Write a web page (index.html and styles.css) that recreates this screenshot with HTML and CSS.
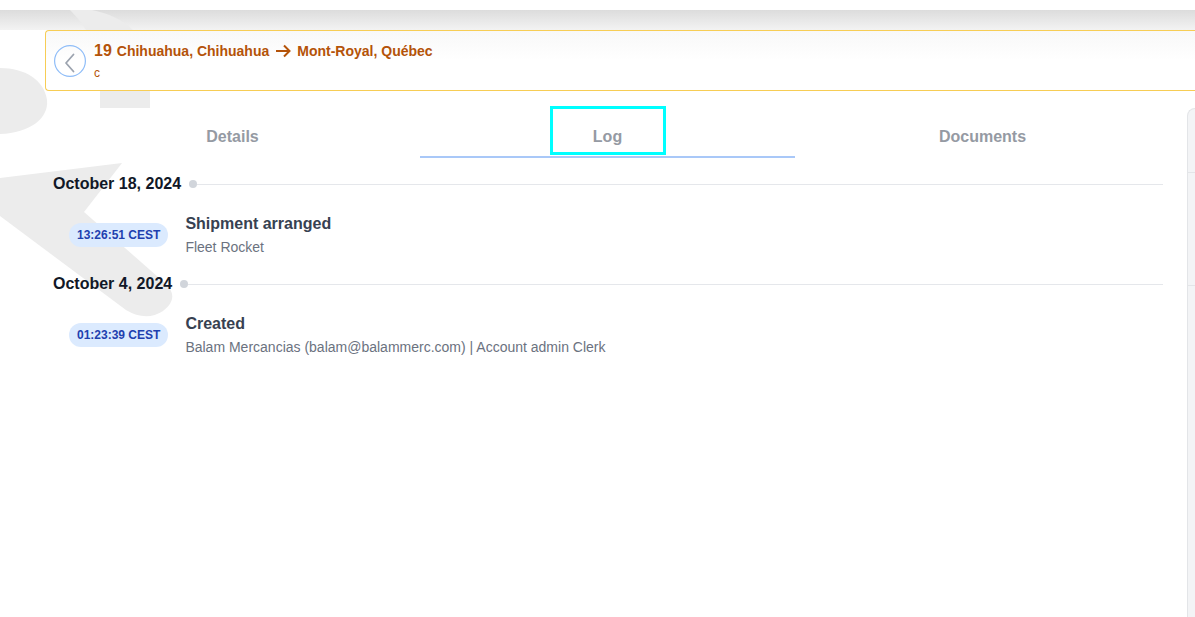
FILE: index.html
```
<!DOCTYPE html>
<html lang="en">
<head>
    <meta charset="UTF-8">
    <title>Shipment log</title>
    <link rel="stylesheet" href="styles.css">
</head>
<body>
    <div class="top-shade"></div>

    <!-- logo en filigrane derrière la page -->
    <svg class="watermark" width="200" height="340" viewBox="0 0 200 340">
        <path d="M92 10 Q150 22 150 78 L150 108 L100 108 L100 80 Q100 40 70 10 Z" />
        <path d="M0 68 C25 68 44 80 47 100 C49 118 30 133 0 134 Z" />
        <path d="M0 178 L122 163 L84 212 L166 284 Q180 298 163 311 Q146 322 126 310 L0 216 Z" />
    </svg>

    <div class="shipment-header">
        <button class="back-button" aria-label="Back">
            <svg width="32" height="32" viewBox="0 0 32 32">
                <circle cx="16" cy="16" r="15.4" fill="none" stroke="#8fbdf8" stroke-width="1.2" />
                <path d="M19.5 9.5 L12 18 L19.5 26.5" fill="none" stroke="#9ca3af" stroke-width="1.8" stroke-linecap="round" stroke-linejoin="round" />
            </svg>
        </button>
        <div class="shipment-info">
            <div class="shipment-title">
                <span class="shipment-id">19</span>
                <span>Chihuahua, Chihuahua</span>
                <svg class="route-arrow" width="16" height="14" viewBox="0 0 16 14">
                    <path d="M1 7 H14.5 M9 1.5 L14.5 7 L9 12.5" fill="none" stroke="#b45309" stroke-width="2" />
                </svg>
                <span>Mont-Royal, Québec</span>
            </div>
            <div class="shipment-sub">c</div>
        </div>
    </div>

    <div class="layout">
        <div class="main">
            <div class="tabs">
                <div class="tab"><button class="tab-button">Details</button></div>
                <div class="tab active"><button class="tab-button focused">Log</button></div>
                <div class="tab"><button class="tab-button">Documents</button></div>
            </div>

            <div class="timeline">
                <div class="log-day">
                    <div class="day-header">
                        <span class="day-label">October 18, 2024</span>
                        <span class="day-dot"></span>
                        <span class="day-line"></span>
                    </div>
                    <div class="log-entry">
                        <span class="log-time">13:26:51 CEST</span>
                        <div class="log-text">
                            <div class="log-title">Shipment arranged</div>
                            <div class="log-meta">Fleet Rocket</div>
                        </div>
                    </div>
                </div>

                <div class="log-day">
                    <div class="day-header">
                        <span class="day-label">October 4, 2024</span>
                        <span class="day-dot"></span>
                        <span class="day-line"></span>
                    </div>
                    <div class="log-entry">
                        <span class="log-time">01:23:39 CEST</span>
                        <div class="log-text">
                            <div class="log-title">Created</div>
                            <div class="log-meta">Balam Mercancias (balam@balammerc.com) | Account admin Clerk</div>
                        </div>
                    </div>
                </div>
            </div>
        </div>

        <aside class="side-panel">
            <div class="side-head"></div>
            <div class="side-block"></div>
        </aside>
    </div>
</body>
</html>
```

FILE: styles.css
```
body {
    margin: 0;
    padding: 0;
    font-family: "Liberation Sans", Arial, sans-serif;
    background-color: #ffffff;
    overflow: hidden;
}

.top-shade {
    height: 20px;
    margin-top: 10px;
    background: linear-gradient(#dcdcdc, #f3f3f3);
}

.watermark {
    position: absolute;
    top: 0;
    left: 0;
    z-index: 0;
    fill: #ececec;
}

.shipment-header {
    position: relative;
    z-index: 1;
    margin-left: 45px;
    height: 59px;
    border: 1px solid #f7cd55;
    border-right: none;
    border-radius: 4px 0 0 4px;
    background: linear-gradient(#f8f8f8, #ffffff 50%);
    display: flex;
    align-items: center;
    gap: 8px;
    padding-left: 8px;
}

.back-button {
    width: 32px;
    height: 32px;
    padding: 0;
    border: none;
    background: none;
    cursor: pointer;
}

.back-button svg {
    display: block;
}

.shipment-title {
    display: flex;
    align-items: center;
    height: 20px;
    color: #b45309;
    font-size: 14px;
    font-weight: bold;
}

.shipment-id {
    font-size: 16px;
    margin-right: 5px;
}

.route-arrow {
    margin: 0 6px;
}

.shipment-sub {
    margin-top: 4px;
    font-size: 12px;
    line-height: 16px;
    color: #b45309;
}

.layout {
    position: relative;
    z-index: 1;
    display: flex;
}

.main {
    width: 1125px;
    margin-left: 45px;
}

.tabs {
    display: grid;
    grid-template-columns: repeat(3, 1fr);
}

.tab {
    display: flex;
    justify-content: center;
    padding: 15px 0 1px;
    border-bottom: 2px solid transparent;
}

.tab.active {
    border-bottom-color: #a9c8f8;
}

.tab-button {
    width: 116px;
    height: 49px;
    box-sizing: border-box;
    padding: 13px 0 0;
    border: 3px solid transparent;
    background: none;
    font-family: "Liberation Sans", Arial, sans-serif;
    font-size: 16px;
    font-weight: bold;
    line-height: 18px;
    color: #959aa3;
    cursor: pointer;
}

.tab-button.focused {
    border-color: #00ffff;
}

.timeline {
    margin-top: 16px;
    padding: 0 7px 0 8px;
}

.day-header {
    display: flex;
    align-items: center;
    height: 20px;
    margin-bottom: 20px;
}

.day-label {
    font-size: 16px;
    font-weight: bold;
    color: #111827;
}

.day-dot {
    width: 8px;
    height: 8px;
    margin-left: 8px;
    border-radius: 50%;
    background-color: #d1d5db;
}

.day-line {
    flex: 1;
    height: 1px;
    background-color: #e5e7eb;
}

.log-entry {
    display: flex;
    align-items: center;
    padding-left: 16px;
    margin-bottom: 18px;
}

.log-time {
    height: 24px;
    line-height: 24px;
    padding: 0 8px;
    margin-right: 17px;
    border-radius: 12px;
    background-color: #dbeafe;
    color: #1e40af;
    font-size: 12px;
    font-weight: bold;
}

.log-title {
    font-size: 16px;
    line-height: 20px;
    font-weight: bold;
    color: #374151;
}

.log-meta {
    margin-top: 4px;
    font-size: 14px;
    line-height: 18px;
    color: #6b7280;
}

.side-panel {
    flex: 1;
    margin-left: 17px;
    margin-top: 17px;
    height: calc(100vh - 108px);
    background-color: #f3f4f6;
    border-left: 1px solid #e3e5e8;
    border-top: 1px solid #e3e5e8;
    border-top-left-radius: 8px;
}

.side-head {
    height: 63px;
    border-bottom: 1px solid #e3e5e8;
}

.side-block {
    height: 112px;
    border-bottom: 1px solid #e3e5e8;
}
```
